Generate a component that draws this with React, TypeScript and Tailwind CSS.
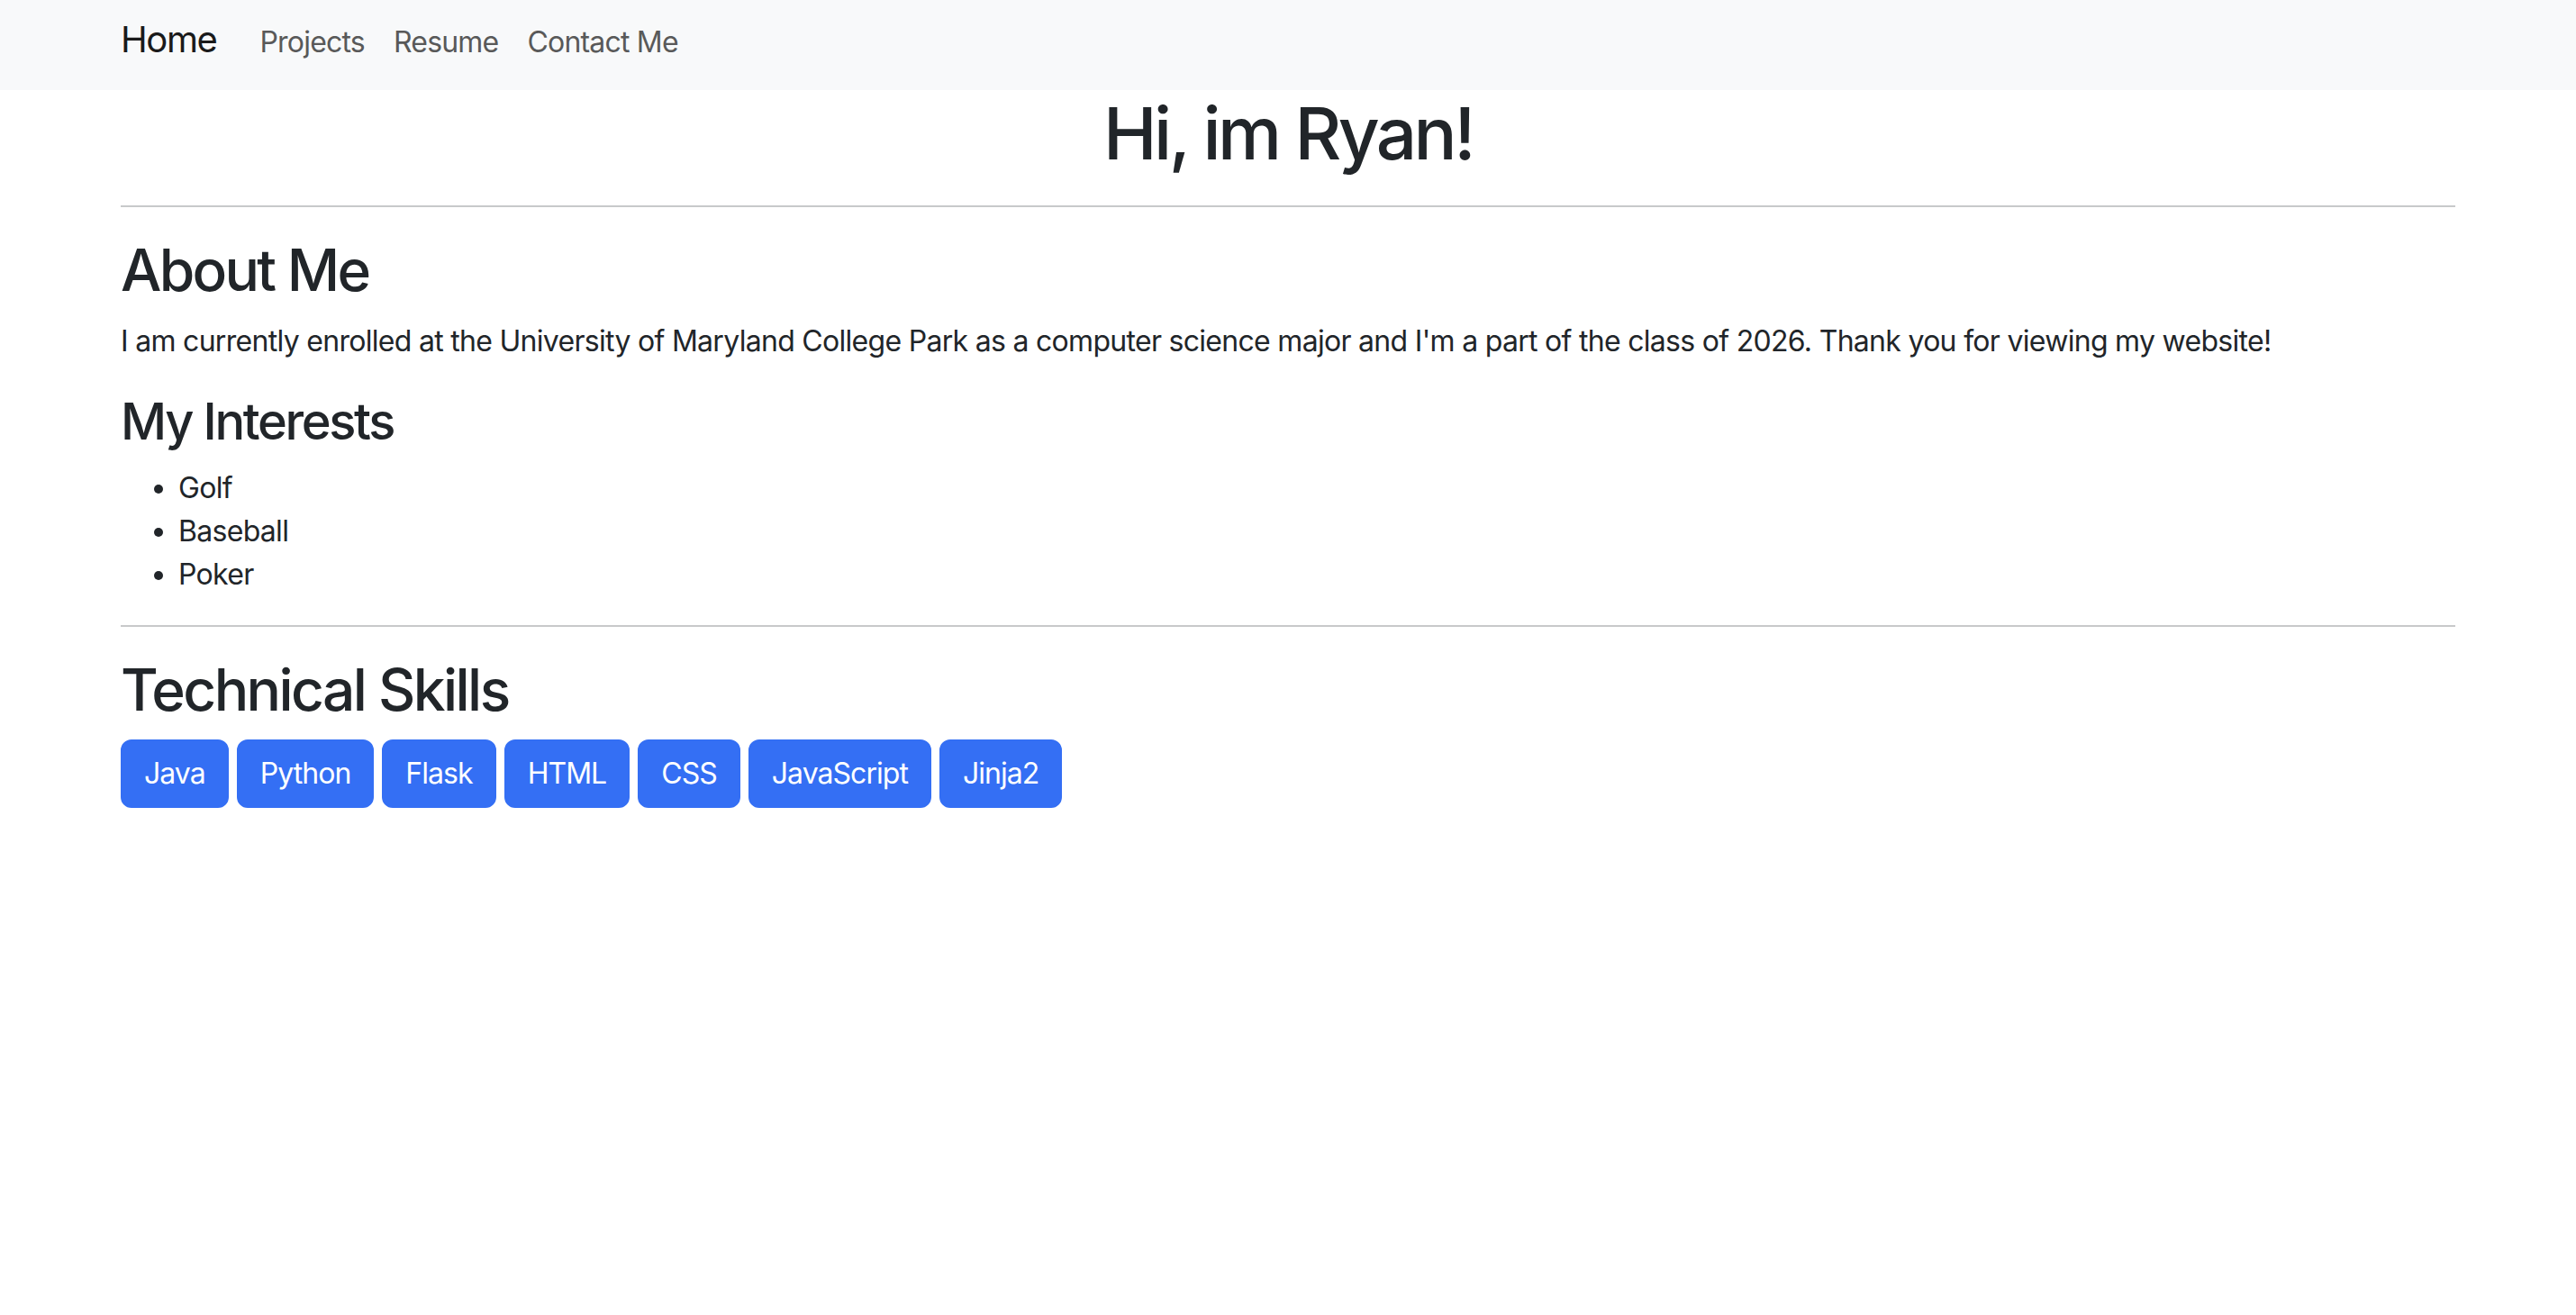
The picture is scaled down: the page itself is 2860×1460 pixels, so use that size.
const interests = ["Golf", "Baseball", "Poker"];
const skills = ["Java", "Python", "Flask", "HTML", "CSS", "JavaScript", "Jinja2"];

function Navbar() {
  return (
    <nav className="h-[100px] bg-[#f8f9fa]">
      <div className="max-w-[2640px] mx-auto px-[24px] pt-[24px] flex items-baseline">
        <a href="#" className="text-[40px] leading-[40px] tracking-[-0.035em] text-[#1a1a1a] mr-[32px]">
          Home
        </a>
        <a href="#" className="text-[32px] leading-[40px] tracking-[-0.025em] text-[#595959] px-[16px]">
          Projects
        </a>
        <a href="#" className="text-[32px] leading-[40px] tracking-[-0.025em] text-[#595959] px-[16px]">
          Resume
        </a>
        <a href="#" className="text-[32px] leading-[40px] tracking-[-0.025em] text-[#595959] px-[16px]">
          Contact Me
        </a>
      </div>
    </nav>
  );
}

export default function App() {
  return (
    <div
      className="min-h-screen bg-white text-[#212529]"
      style={{ fontFamily: "Inter, 'Noto Sans', sans-serif" }}
    >
      <Navbar />
      <main className="max-w-[2640px] mx-auto px-[24px]">
        <h1 className="text-center text-[80px] leading-[1.2] font-medium tracking-[-0.044em] mb-[16px]">
          Hi, im Ryan!
        </h1>
        <hr className="my-[32px] border-0 border-t-2 border-[#c8c9ca]" />

        {/* About */}
        <h2 className="text-[64px] leading-[1.2] font-medium tracking-[-0.042em] mb-[16px]">About Me</h2>
        <p className="text-[32px] leading-[48px] tracking-[-0.022em] mb-[32px]">
          I am currently enrolled at the University of Maryland College Park as a computer
          science major and I'm a part of the class of 2026. Thank you for viewing my website!
        </p>

        <h3 className="text-[56px] leading-[1.2] font-medium tracking-[-0.042em] mb-[16px]">My Interests</h3>
        <ul className="list-disc pl-[64px] text-[32px] leading-[48px] tracking-[-0.022em] mb-[32px]">
          {interests.map((item) => (
            <li key={item}>{item}</li>
          ))}
        </ul>
        <hr className="my-[32px] border-0 border-t-2 border-[#c8c9ca]" />

        {/* Skills */}
        <h2 className="text-[64px] leading-[1.2] font-medium tracking-[-0.04em] mb-[16px]">Technical Skills</h2>
        <div className="flex flex-wrap gap-[9px]">
          {skills.map((skill) => (
            <button
              key={skill}
              className="px-[24px] py-[12px] text-[32px] leading-[48px] tracking-[-0.03em] text-white bg-[#346ff4] border-2 border-[#346ff4] rounded-[12px]"
            >
              {skill}
            </button>
          ))}
        </div>
      </main>
    </div>
  );
}
